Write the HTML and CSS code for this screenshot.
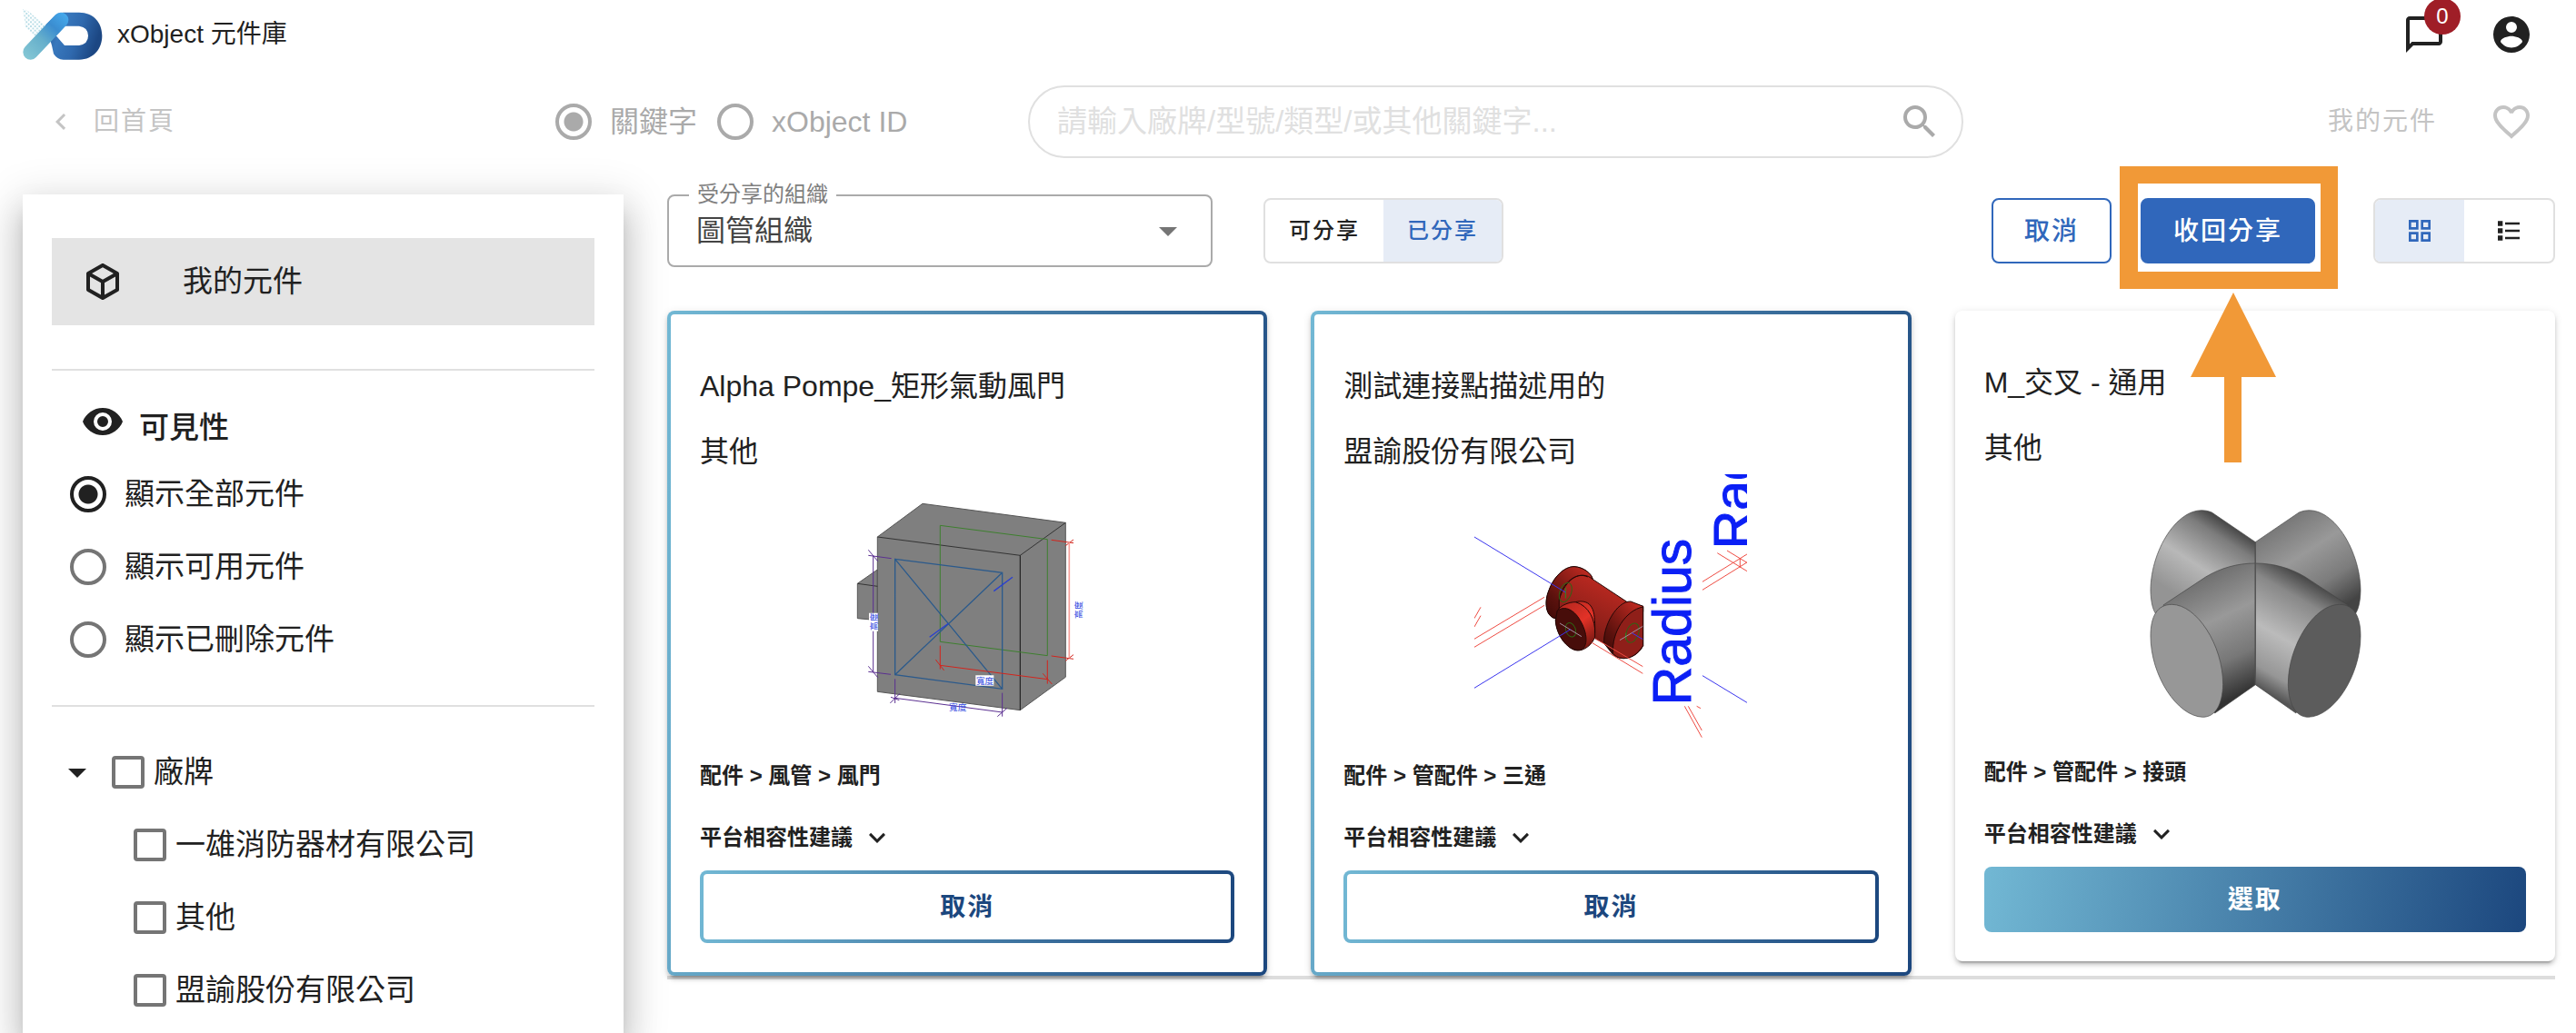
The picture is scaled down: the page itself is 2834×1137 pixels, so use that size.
FILE: index.html
```html
<!DOCTYPE html>
<html lang="zh-Hant">
<head>
<meta charset="utf-8">
<meta name="viewport" content="width=device-width, initial-scale=1">
<title>xObject 元件庫</title>
<link rel="stylesheet" href="styles.css">
</head>
<body>
<header class="topbar">
  <a class="brand" href="#">
    <svg class="brand-logo" viewBox="46 28 264 172" aria-hidden="true">
      <defs>
        <linearGradient id="logo-ring" x1="0" x2="1" y1="0" y2="0.3">
          <stop offset="0" stop-color="#214e8c"/><stop offset=".35" stop-color="#3878bd"/><stop offset=".65" stop-color="#2f69ae"/><stop offset="1" stop-color="#1c4783"/>
        </linearGradient>
        <linearGradient id="logo-bar" gradientUnits="userSpaceOnUse" x1="190" x2="60" y1="50" y2="190">
          <stop offset="0" stop-color="#45a9ec"/><stop offset=".3" stop-color="#3b8dd0"/><stop offset=".6" stop-color="#66afcb"/><stop offset="1" stop-color="#83c6d4"/>
        </linearGradient>
        <pattern id="logo-dots" width="14" height="14" patternUnits="userSpaceOnUse">
          <circle cx="3" cy="3" r="3" fill="#a5d4df"/><circle cx="10" cy="10" r="3" fill="#a5d4df"/>
        </pattern>
      </defs>
      <path d="M46 30L60 34L122 84L88 122L56 92Z" fill="url(#logo-dots)"/>
      <path fill-rule="evenodd" d="M180 41H232C280 41 308 75 308 118S280 197 232 197H180Q160 197 148 178L142 150L122 82L150 54Q163 41 180 41ZM184 86L156 118L184 150H232Q262 146 262 118T232 86Z" fill="url(#logo-ring)"/>
      <path d="M172 66L72 172" fill="none" stroke="url(#logo-bar)" stroke-width="50" stroke-linecap="round"/>
    </svg>
    <span>xObject 元件庫</span>
  </a>
  <div class="top-actions">
    <button class="icon-button" type="button" aria-label="訊息">
      <svg class="icon" viewBox="0 0 24 24"><path d="M20 2H4C2.9 2 2 2.9 2 4V22L6 18H20C21.1 18 22 17.1 22 16V4C22 2.9 21.1 2 20 2M20 16H5.2L4 17.2V4H20V16Z"/></svg>
      <span class="badge">0</span>
    </button>
    <button class="icon-button" type="button" aria-label="帳號">
      <svg class="icon" viewBox="0 0 24 24"><path d="M12,19.2C9.5,19.2 7.29,17.92 6,16C6.03,14 10,12.9 12,12.9C14,12.9 17.97,14 18,16C16.71,17.92 14.5,19.2 12,19.2M12,5A3,3 0 0,1 15,8A3,3 0 0,1 12,11A3,3 0 0,1 9,8A3,3 0 0,1 12,5M12,2A10,10 0 0,0 2,12A10,10 0 0,0 12,22A10,10 0 0,0 22,12C22,6.47 17.5,2 12,2Z"/></svg>
    </button>
  </div>
</header>

<nav class="searchbar" aria-label="搜尋">
  <a class="back-link" href="#">
    <svg class="icon icon-small" viewBox="0 0 24 24" aria-hidden="true"><path d="M15.41,16.58L10.83,12L15.41,7.41L14,6L8,12L14,18L15.41,16.58Z"/></svg>
    <span>回首頁</span>
  </a>
  <div class="search-mode">
    <label class="choice"><input class="radio" type="radio" name="mode" checked><span>關鍵字</span></label>
    <label class="choice"><input class="radio" type="radio" name="mode"><span>xObject ID</span></label>
  </div>
  <div class="search-field">
    <input class="search-input" type="text" aria-label="關鍵字搜尋" placeholder="請輸入廠牌/型號/類型/或其他關鍵字...">
    <svg class="icon search-icon" viewBox="0 0 24 24" aria-hidden="true"><path d="M9.5,3A6.5,6.5 0 0,1 16,9.5C16,11.11 15.41,12.59 14.44,13.73L14.71,14H15.5L20.5,19L19,20.5L14,15.5V14.71L13.73,14.44C12.59,15.41 11.11,16 9.5,16A6.5,6.5 0 0,1 3,9.5A6.5,6.5 0 0,1 9.5,3M9.5,5C7,5 5,7 5,9.5C5,12 7,14 9.5,14C12,14 14,12 14,9.5C14,7 12,5 9.5,5Z"/></svg>
  </div>
  <div class="search-links">
    <a class="muted-link" href="#">我的元件</a>
    <button class="icon-button muted" type="button" aria-label="收藏">
      <svg class="icon" viewBox="0 0 24 24"><path d="M12.1,18.55L12,18.65L11.89,18.55C7.14,14.24 4,11.39 4,8.5C4,6.5 5.5,5 7.5,5C9.04,5 10.54,6 11.07,7.36H12.93C13.46,6 14.96,5 16.5,5C18.5,5 20,6.5 20,8.5C20,11.39 16.86,14.24 12.1,18.55M16.5,3C14.76,3 13.09,3.81 12,5.08C10.91,3.81 9.24,3 7.5,3C4.42,3 2,5.41 2,8.5C2,12.27 5.4,15.36 10.55,20.03L12,21.35L13.45,20.03C18.6,15.36 22,12.27 22,8.5C22,5.41 19.58,3 16.5,3Z"/></svg>
    </button>
  </div>
</nav>

<div class="layout">
  <aside class="sidebar">
    <a class="side-item" href="#">
      <svg class="icon" viewBox="0 0 24 24" aria-hidden="true"><path d="M21,16.5C21,16.88 20.79,17.21 20.47,17.38L12.57,21.82C12.41,21.94 12.21,22 12,22C11.79,22 11.59,21.94 11.43,21.82L3.53,17.38C3.21,17.21 3,16.88 3,16.5V7.5C3,7.12 3.21,6.79 3.53,6.62L11.43,2.18C11.59,2.06 11.79,2 12,2C12.21,2 12.41,2.06 12.57,2.18L20.47,6.62C20.79,6.79 21,7.12 21,7.5V16.5M12,4.15L6.04,7.5L12,10.85L17.96,7.5L12,4.15M5,15.91L11,19.29V12.58L5,9.21V15.91M19,15.91V9.21L13,12.58V19.29L19,15.91Z"/></svg>
      <span>我的元件</span>
    </a>
    <section class="filter">
      <h2 class="filter-title">
        <svg class="icon" viewBox="0 0 24 24" aria-hidden="true"><path d="M12,9A3,3 0 0,0 9,12A3,3 0 0,0 12,15A3,3 0 0,0 15,12A3,3 0 0,0 12,9M12,17A5,5 0 0,1 7,12A5,5 0 0,1 12,7A5,5 0 0,1 17,12A5,5 0 0,1 12,17M12,4.5C7,4.5 2.73,7.61 1,12C2.73,16.39 7,19.5 12,19.5C17,19.5 21.27,16.39 23,12C21.27,7.61 17,4.5 12,4.5Z"/></svg>
        <span>可見性</span>
      </h2>
      <label class="filter-row"><input class="radio" type="radio" name="visibility" checked><span>顯示全部元件</span></label>
      <label class="filter-row"><input class="radio" type="radio" name="visibility"><span>顯示可用元件</span></label>
      <label class="filter-row"><input class="radio" type="radio" name="visibility"><span>顯示已刪除元件</span></label>
    </section>
    <section class="tree">
      <div class="tree-parent">
        <button class="icon-button" type="button" aria-label="收合廠牌">
          <svg class="icon" viewBox="0 0 24 24"><path d="M7,10L12,15L17,10H7Z"/></svg>
        </button>
        <label class="tree-row"><input class="checkbox" type="checkbox"><span>廠牌</span></label>
      </div>
      <div class="tree-children">
        <label class="tree-row"><input class="checkbox" type="checkbox"><span>一雄消防器材有限公司</span></label>
        <label class="tree-row"><input class="checkbox" type="checkbox"><span>其他</span></label>
        <label class="tree-row"><input class="checkbox" type="checkbox"><span>盟諭股份有限公司</span></label>
      </div>
    </section>
  </aside>

  <main>
    <div class="toolbar">
      <div class="select-field">
        <label class="select-label" for="org">受分享的組織</label>
        <select class="select" id="org"><option>圖管組織</option></select>
        <svg class="icon select-arrow" viewBox="0 0 24 24" aria-hidden="true"><path d="M7,10L12,15L17,10H7Z"/></svg>
      </div>
      <div class="toggle share-toggle">
        <button class="toggle-button" type="button" aria-pressed="false">可分享</button>
        <button class="toggle-button active" type="button" aria-pressed="true">已分享</button>
      </div>
      <div class="toolbar-actions">
        <button class="button outlined" type="button">取消</button>
        <div class="callout">
          <button class="button primary" type="button">收回分享</button>
          <svg class="callout-mark" viewBox="0 0 240 326" aria-hidden="true">
            <path d="M0 0H240V135H0ZM20 19V116H221V19Z" fill-rule="evenodd"/>
            <path d="M125 139L172 232H134V326H115V232H78Z"/>
          </svg>
        </div>
      </div>
      <div class="toggle view-toggle">
        <button class="toggle-button active" type="button" aria-label="格狀檢視" aria-pressed="true">
          <svg class="icon icon-toggle" viewBox="0 0 24 24"><path fill-rule="evenodd" d="M3 11H11V3H3ZM5 5H9V9H5ZM13 21H21V13H13ZM15 15H19V19H15ZM3 21H11V13H3ZM5 15H9V19H5ZM13 3V11H21V3ZM19 9H15V5H19Z"/></svg>
        </button>
        <button class="toggle-button" type="button" aria-label="清單檢視" aria-pressed="false">
          <svg class="icon icon-toggle" viewBox="0 0 24 24"><path d="M3,4H7V8H3V4M9,5V7H21V5H9M3,10H7V14H3V10M9,11V13H21V11H9M3,16H7V20H3V16M9,17V19H21V17H9"/></svg>
        </button>
      </div>
    </div>

    <div class="cards">
      <article class="card selected">
        <h3 class="card-title">Alpha Pompe_矩形氣動風門</h3>
        <p class="card-brand">其他</p>
        <svg class="preview" viewBox="0 0 300 300" role="img" aria-label="矩形氣動風門">
          <g transform="translate(-14 8) scale(.3333)" fill="none" stroke-width="3">
            <path d="M130 337L196 291V458L130 452Z" fill="#7f7f7f" stroke="#555"/>
            <path d="M196 183L345 73L817 136V646L667 755L196 694Z" fill="#7f7f7f" stroke="#555"/>
            <path d="M130 337L196 346M196 183L667 244L817 136" stroke="#333"/>
            <path d="M667 244V755" stroke="#111"/>
            <path d="M403 145L757 191V575L403 529Z" stroke="#3d7f2e"/>
            <path d="M254 256L608 301V685L254 638ZM254 256L608 685M254 638L608 301" stroke="#2b5a8c" stroke-width="4"/>
            <path d="M580 362L642 316M368 514L430 469" stroke="#2a3fd0" stroke-width="4"/>
            <path d="M182 244V630M166 226L198 264M166 244L242 254M166 610L198 648M166 628L240 637M254 652V732M608 698V776M254 715L608 762M238 732L270 700M592 776L624 748M240 712L268 722" stroke="#5a2f91"/>
            <path d="M403 542V620M757 590V668M403 607L757 653M388 588L416 624M742 634L772 669M770 193L843 203M770 576L843 586M817 212L843 192M817 592L843 572" stroke="#d3241c"/>
            <path d="M829 200V583" stroke="#f7a09a" stroke-width="5"/>
            <path d="M520 640H580V674H520ZM168 434H198V494H168Z" fill="#fff"/>
            <g class="dimension" stroke="none">
              <text x="522" y="670">寬度</text>
              <text x="432" y="756">寬度</text>
              <text transform="translate(194 492) rotate(-90)">高度</text>
              <text transform="translate(870 453) rotate(-90)">高度</text>
            </g>
          </g>
        </svg>
        <p class="card-category">配件 &gt; 風管 &gt; 風門</p>
        <button class="compat" type="button"><span>平台相容性建議</span><svg class="icon icon-small" viewBox="0 0 24 24" aria-hidden="true"><path d="M7.41,8.58L12,13.17L16.59,8.58L18,10L12,16L6,10L7.41,8.58Z"/></svg></button>
        <button class="card-button" type="button">取消</button>
      </article>

      <article class="card selected">
        <h3 class="card-title">測試連接點描述用的</h3>
        <p class="card-brand">盟諭股份有限公司</p>
        <svg class="preview" viewBox="0 0 300 300" role="img" aria-label="三通">
          <defs>
            <linearGradient id="red-pipe" x1="0" y1="1" x2=".5" y2="0"><stop offset="0" stop-color="#3d0a07"/><stop offset=".5" stop-color="#8d1f19"/><stop offset="1" stop-color="#c42b22"/></linearGradient>
            <linearGradient id="red-cap" x1="0" y1="1" x2=".9" y2="0"><stop offset="0" stop-color="#3d0a07"/><stop offset=".3" stop-color="#5a110d"/><stop offset="1" stop-color="#c52b22"/></linearGradient>
            <linearGradient id="red-front" x1=".2" y1="0" x2=".8" y2="1"><stop offset="0" stop-color="#b3271f"/><stop offset=".5" stop-color="#e33227"/><stop offset="1" stop-color="#6d1610"/></linearGradient>
          </defs>
          <g transform="translate(-22 -12) scale(.3333)" fill="none" stroke-width="3">
            <path d="M333 512C300 505 297 455 312 420C328 375 362 341 396 341C425 343 452 362 457 383L569 457L623 472V602C610 630 580 645 557 644C530 642 520 628 516 622L494 594L464 578L345 492Z" fill="url(#red-pipe)" stroke="#250806"/>
            <path d="M333 512C300 505 297 455 312 420C328 375 362 341 396 341C425 343 452 362 457 383C420 350 360 380 346 450V492Z" fill="url(#red-cap)" stroke="#250806"/>
            <path d="M494 594C490 540 535 455 582 456L623 472V490C570 490 530 540 524 628Z" fill="url(#red-cap)" stroke="#250806"/>
            <path d="M524 628C518 560 565 485 623 474V602C605 632 580 645 557 644C540 643 530 636 524 628Z" fill="#8f1f19" stroke="#250806"/>
            <path d="M340 487C350 468 380 458 400 458C420 452 440 458 448 468C462 484 464 510 464 540V574C454 600 430 618 406 618C370 615 335 560 334 515Z" fill="url(#red-front)" stroke="#250806"/>
            <path d="M340 487C360 470 390 480 410 510C438 552 444 600 420 616C380 625 338 575 334 520Z" fill="#470d0a" stroke="#250806"/>
            <path d="M400 458C445 470 466 520 464 560M346 450C360 400 400 355 440 375" stroke="#250806"/>
            <ellipse cx="367" cy="426" rx="19" ry="33" transform="rotate(20 367 426)" stroke="#2f6415"/>
            <ellipse cx="384" cy="550" rx="16" ry="24" transform="rotate(-20 384 550)" stroke="#2f6415"/>
            <ellipse cx="588" cy="560" rx="20" ry="33" transform="rotate(20 588 560)" stroke="#2f6415"/>
            <path d="M367 410V446M566 560V582" stroke="#2d8a24"/>
            <path d="M348 528L420 572M546 584L622 538" stroke="#a48fa0"/>
            <path d="M66 243L367 426M66 742L384 548M586 560L622 581M819 701L966 790" stroke="#3a35ee"/>
            <path d="M66 580L297 442M66 607L297 469M66 512L87 475M66 540L87 503M464 578L622 671M454 592L622 694M760 802L817 905M772 802L817 882M800 802L813 809M819 391L966 300M819 418L966 327M868 296L966 356M900 288L966 328M943 314V344" stroke="#ee4b42"/>
            <g class="radius">
              <text transform="translate(779 799) rotate(-90)">Radius</text>
              <text transform="translate(982 283) rotate(-90)">Radius</text>
            </g>
          </g>
        </svg>
        <p class="card-category">配件 &gt; 管配件 &gt; 三通</p>
        <button class="compat" type="button"><span>平台相容性建議</span><svg class="icon icon-small" viewBox="0 0 24 24" aria-hidden="true"><path d="M7.41,8.58L12,13.17L16.59,8.58L18,10L12,16L6,10L7.41,8.58Z"/></svg></button>
        <button class="card-button" type="button">取消</button>
      </article>

      <article class="card">
        <h3 class="card-title">M_交叉 - 通用</h3>
        <p class="card-brand">其他</p>
        <svg class="preview" viewBox="0 0 300 300" role="img" aria-label="接頭">
          <defs>
            <linearGradient id="arm-nw" gradientUnits="userSpaceOnUse" x1="350" y1="110" x2="190" y2="360"><stop offset="0" stop-color="#3f3f3f"/><stop offset=".2" stop-color="#7c7c7c"/><stop offset=".6" stop-color="#b8b8b8"/><stop offset="1" stop-color="#949494"/></linearGradient>
            <linearGradient id="arm-ne" gradientUnits="userSpaceOnUse" x1="520" y1="110" x2="700" y2="390"><stop offset="0" stop-color="#7a7a7a"/><stop offset=".35" stop-color="#999"/><stop offset=".7" stop-color="#7c7c7c"/><stop offset="1" stop-color="#444"/></linearGradient>
            <linearGradient id="arm-sw" gradientUnits="userSpaceOnUse" x1="210" y1="310" x2="380" y2="670"><stop offset="0" stop-color="#717171"/><stop offset=".35" stop-color="#999"/><stop offset=".7" stop-color="#777"/><stop offset="1" stop-color="#333"/></linearGradient>
            <linearGradient id="arm-se" gradientUnits="userSpaceOnUse" x1="650" y1="310" x2="450" y2="660"><stop offset="0" stop-color="#3f3f3f"/><stop offset=".2" stop-color="#888"/><stop offset=".55" stop-color="#bbb"/><stop offset=".85" stop-color="#969696"/><stop offset="1" stop-color="#555"/></linearGradient>
          </defs>
          <g transform="translate(9 22) scale(.3333)" stroke="#444" stroke-width="2">
            <path d="M424 170L280 72C180 30 78 190 78 330C79 370 86 393 94 405L424 300Z" fill="url(#arm-nw)"/>
            <path d="M424 170L568 72C668 30 770 190 771 330C770 370 763 393 755 405L424 300Z" fill="url(#arm-ne)"/>
            <path d="M424 240C365 240 310 255 260 285L120 378L290 735L424 641Z" fill="url(#arm-sw)"/>
            <path d="M424 240C483 240 538 255 588 285L729 378L558 735L424 641Z" fill="url(#arm-se)"/>
            <path d="M148 376C230 376 317 510 317 640C315 710 290 748 250 748C165 745 78 610 78 480C78 415 100 376 148 376Z" fill="#979797"/>
            <path d="M701 376C619 376 532 510 532 640C534 710 559 748 599 748C684 745 771 610 771 480C771 415 749 376 701 376Z" fill="#5c5c5c"/>
            <path d="M424 170V641" stroke="#555" stroke-width="4"/>
          </g>
        </svg>
        <p class="card-category">配件 &gt; 管配件 &gt; 接頭</p>
        <button class="compat" type="button"><span>平台相容性建議</span><svg class="icon icon-small" viewBox="0 0 24 24" aria-hidden="true"><path d="M7.41,8.58L12,13.17L16.59,8.58L18,10L12,16L6,10L7.41,8.58Z"/></svg></button>
        <button class="card-button" type="button">選取</button>
      </article>
    </div>
  </main>
</div>
</body>
</html>
```

FILE: styles.css
```css
:root {
  --ink: #212121;
  --blue: #3067bb;
  --blue-soft: #e6ecf6;
  --line: #e0e0e0;
  --gradient: linear-gradient(98deg, #72b8d4, #1c477e);
}

* { box-sizing: border-box; }

body {
  margin: 0;
  min-height: 100vh;
  display: flex;
  flex-direction: column;
  background: #fff;
  color: var(--ink);
  font-family: "Liberation Sans", "Noto Sans CJK TC", sans-serif;
  font-size: 32px;
  line-height: 40px;
}

h2, h3, p { margin: 0; font-weight: 400; font-size: inherit; }
a { color: inherit; text-decoration: none; }
button, input, select { font: inherit; color: inherit; margin: 0; }
button { border: 0; padding: 0; background: none; }

.icon { display: block; flex: none; width: 48px; height: 48px; fill: currentColor; }
.icon-small { width: 36px; height: 36px; }
.icon-toggle { width: 32px; height: 32px; }
.icon-button { position: relative; }

/* header */
.topbar {
  display: flex;
  justify-content: space-between;
  align-items: center;
  height: 76px;
  padding: 0 47px 0 25px;
}
.brand { display: flex; align-items: center; gap: 16px; font-size: 28px; }
.brand-logo { width: 88px; height: 58px; }
.top-actions { display: flex; gap: 48px; }
.badge {
  position: absolute;
  left: 24px;
  top: -16px;
  width: 40px;
  height: 40px;
  border-radius: 50%;
  background: #9f1e27;
  color: #fff;
  font-size: 24px;
}

/* search row */
.searchbar {
  display: grid;
  grid-template-columns: 611fr 520fr 1029fr 674fr;
  align-items: center;
  height: 116px;
  color: #aaa;
}
.back-link {
  display: flex;
  align-items: center;
  gap: 18px;
  padding-left: 49px;
}
.back-link, .muted-link, .muted { color: #c4c4c4; }
.back-link, .muted-link, .button, .card-button {
  font-size: 28px;
  letter-spacing: 2px;
}
.search-mode { display: flex; gap: 22px; }
.choice { display: flex; align-items: center; gap: 20px; white-space: nowrap; }
.search-field {
  display: flex;
  align-items: center;
  height: 80px;
  padding: 0 22px 0 30px;
  border: 2px solid var(--line);
  border-radius: 40px;
}
.search-input {
  flex: 1;
  min-width: 0;
  height: 48px;
  padding: 0;
  border: 0;
  outline: 0;
  background: none;
  font-size: 33px;
}
.search-input::placeholder { color: #e0e0e0; opacity: 1; }
.search-links {
  display: flex;
  justify-content: flex-end;
  align-items: center;
  gap: 58px;
  padding-right: 47px;
}

.radio {
  appearance: none;
  flex: none;
  width: 40px;
  height: 40px;
  border: 4px solid #757575;
  border-radius: 50%;
}
.radio:checked {
  border-color: var(--ink);
  background: radial-gradient(circle, var(--ink) 10px, transparent 11px);
}
.search-mode .radio { border-color: #aaa; }
.search-mode .radio:checked { background: radial-gradient(circle, #aaa 10px, transparent 11px); }
.checkbox {
  appearance: none;
  flex: none;
  width: 36px;
  height: 36px;
  border: 4px solid #757575;
  border-radius: 4px;
}

/* page columns */
.layout {
  flex: 1;
  display: grid;
  grid-template-columns: 661fr 2077fr;
  gap: 48px;
  padding: 22px 23px 0 25px;
}
.sidebar {
  padding: 48px 32px 0;
  font-size: 33px;
  box-shadow: 0 14px 16px -8px rgba(0, 0, 0, .2), 0 24px 34px 4px rgba(0, 0, 0, .14), 0 10px 44px 8px rgba(0, 0, 0, .12);
}
.side-item {
  display: flex;
  align-items: center;
  gap: 64px;
  height: 96px;
  padding-left: 32px;
  background: #e4e4e4;
}
.filter {
  margin-top: 48px;
  padding-top: 32px;
  border-top: 2px solid var(--line);
}
.filter-title {
  display: flex;
  align-items: flex-end;
  gap: 16px;
  height: 64px;
  padding: 0 0 13px 32px;
  font-weight: 500;
}
.filter-title .icon { align-self: flex-start; }
.filter-row {
  display: flex;
  align-items: center;
  gap: 20px;
  height: 80px;
  padding-left: 20px;
}
.tree {
  margin-top: 32px;
  padding-top: 32px;
  border-top: 2px solid var(--line);
}
.tree-parent { display: flex; align-items: center; gap: 14px; padding-left: 4px; }
.tree-children { padding-left: 90px; }
.tree-row { display: flex; align-items: center; gap: 10px; height: 80px; }

/* toolbar */
.toolbar { display: flex; align-items: center; height: 80px; margin-bottom: 48px; }
.select-field { position: relative; width: 600px; height: 80px; margin-right: 56px; }
.select-label {
  position: absolute;
  left: 24px;
  top: -16px;
  padding: 0 9px;
  background: #fff;
  color: #808080;
  font-size: 24px;
  line-height: 32px;
}
.select {
  appearance: none;
  width: 100%;
  height: 100%;
  padding: 0 64px 0 30px;
  border: 2px solid #aaa;
  border-radius: 8px;
  background: none;
  color: #444;
}
.select-arrow { position: absolute; right: 25px; top: 16px; color: #757575; pointer-events: none; }
.toggle {
  display: flex;
  height: 72px;
  border: 2px solid var(--line);
  border-radius: 8px;
  overflow: hidden;
}
.share-toggle { width: 264px; }
.view-toggle { width: 200px; }
.toggle-button {
  flex: 1;
  display: flex;
  align-items: center;
  justify-content: center;
  font-size: 24px;
  font-weight: 500;
  letter-spacing: 2px;
}
.toggle-button.active { background: var(--blue-soft); color: var(--blue); }
.toolbar-actions { display: flex; gap: 32px; margin: 0 64px 0 auto; }
.button {
  height: 72px;
  padding: 2px 34px 0;
  border: 2px solid var(--blue);
  border-radius: 8px;
  font-weight: 500;
}
.outlined { color: var(--blue); }
.primary { background: var(--blue); color: #fff; }
.callout { position: relative; }
.callout-mark {
  position: absolute;
  z-index: 1;
  left: -23px;
  top: -35px;
  width: 240px;
  height: 326px;
  fill: #f19937;
  pointer-events: none;
}

/* cards */
.cards {
  display: grid;
  grid-template-columns: repeat(3, 1fr);
  align-items: start;
  gap: 48px;
  border-bottom: 4px solid #ddd;
}
.card {
  display: flex;
  flex-direction: column;
  padding: 59px 32px 32px;
  border-radius: 8px;
  box-shadow: 0 6px 2px -4px rgba(0, 0, 0, .2), 0 4px 4px rgba(0, 0, 0, .14), 0 2px 10px rgba(0, 0, 0, .12);
}
.card.selected, .selected .card-button {
  border: 4px solid transparent;
  background: linear-gradient(#fff, #fff) padding-box, var(--gradient) border-box;
}
.card-brand { margin-top: 32px; }
.preview { align-self: center; width: 300px; height: 300px; margin-top: 5px; overflow: hidden; }
.dimension { fill: #2a3fe0; font-size: 29px; }
.radius { fill: #0b1ff5; stroke: #0b1ff5; font-size: 177px; }
.card-category, .compat { font-size: 24px; font-weight: 700; line-height: 32px; }
.card-category { margin-top: 16px; }
.compat { display: flex; align-items: center; gap: 9px; height: 36px; margin-top: 34px; }
.card-button {
  height: 72px;
  margin-top: 18px;
  padding-top: 2px;
  border-radius: 8px;
  background: var(--gradient);
  color: #fff;
  font-weight: 700;
}
.selected .card-button { height: 80px; color: #1c477e; }
```
